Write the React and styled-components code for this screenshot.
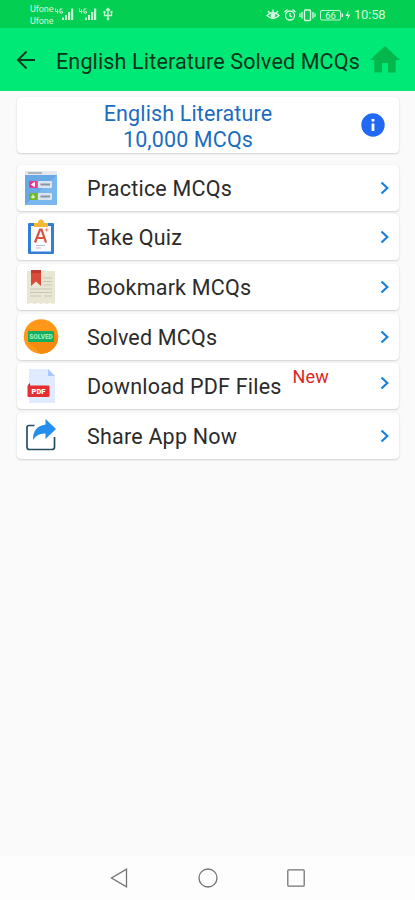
import styled, { createGlobalStyle } from "styled-components";

const items = [
  { label: "Practice MCQs", icon: PracticeIcon },
  { label: "Take Quiz", icon: QuizIcon },
  { label: "Bookmark MCQs", icon: BookmarkIcon },
  { label: "Solved MCQs", icon: SolvedIcon },
  { label: "Download PDF Files", icon: PdfIcon, isNew: true },
  { label: "Share App Now", icon: ShareIcon },
];

const App = () => {
  return (
    <Screen>
      <GlobalStyle />
      <StatusBar>
        <Carrier>
          <span>Ufone</span>
          <span>Ufone</span>
        </Carrier>
        <SignalIcons />
        <StatusRight>
          <StatusIcons />
          <Clock>10:58</Clock>
        </StatusRight>
      </StatusBar>
      <Header>
        <BackButton aria-label="Back">
          <svg width="20" height="20" viewBox="0 0 20 20" fill="none" stroke="#063d1c" strokeWidth="2">
            <path d="M19 10H2.500M10.500 1.500L2 10L10.500 18.500" />
          </svg>
        </BackButton>
        <Title>English Literature Solved MCQs</Title>
        <HomeButton aria-label="Home">
          <svg width="30" height="27" viewBox="0 0 30 27">
            <path d="M15 0L30 14H25.700V26.500H18V17H12V26.500H4.300V14H0Z" fill="#05b64c" />
          </svg>
        </HomeButton>
      </Header>
      <Content>
        <Banner>
          <BannerText>
            English Literature
            <br />
            10,000 MCQs
          </BannerText>
          <InfoButton aria-label="Info">
            <svg width="24" height="24" viewBox="0 0 24 24">
              <circle cx="12" cy="12" r="11.700" fill="#2169f3" />
              <path d="M10.600 6h2.800v2.600h-2.800zM10.600 10.500h2.800v7.500h-2.800z" fill="#fff" />
            </svg>
          </InfoButton>
        </Banner>
        <Menu>
          {items.map(({ label, icon: Icon, isNew }) => (
            <MenuItem key={label}>
              <IconBox>
                <Icon />
              </IconBox>
              <Label>{label}</Label>
              {isNew && <NewTag>New</NewTag>}
              <Chevron $raised={isNew} width="10" height="14" viewBox="0 0 10 14">
                <path d="M1.500 1.500L7.300 7L1.500 12.500" fill="none" stroke="#1b80dc" strokeWidth="2.200" />
              </Chevron>
            </MenuItem>
          ))}
        </Menu>
      </Content>
      <NavBar>
        <svg width="18" height="20" viewBox="0 0 18 20">
          <path d="M16.500 1.200V18.800L1.500 10Z" />
        </svg>
        <svg width="20" height="20" viewBox="0 0 20 20">
          <circle cx="10" cy="10" r="9" />
        </svg>
        <svg width="18" height="18" viewBox="0 0 18 18">
          <rect x="0.800" y="0.800" width="16.400" height="16.400" rx="1" />
        </svg>
      </NavBar>
    </Screen>
  );
};

function SignalIcons() {
  return (
    <svg width="60" height="18" viewBox="0 0 60 18" fill="#c9f5d6">
      <g fill="none" stroke="#c9f5d6" strokeWidth="1">
        <path d="M1.500 4.500V7.500H4.500M3.500 5V9.500M8.500 5H6V9H8.500V7.500H7.500" />
        <path d="M25.500 4.500V7.500H28.500M27.500 5V9.500M32.500 5H30V9H32.500V7.500H31.500" />
      </g>
      <path d="M8 13.500h2v2.500H8zM11 11h2v5h-2zM14 8h2.200v8h-2.200zM17 4.500h2.200V16h-2.200z" />
      <path d="M31 13.500h2v2.500h-2zM34 11h2v5h-2zM37 8h2.200v8h-2.200zM40 4.500h2.200V16h-2.200z" />
      <g fill="none" stroke="#c9f5d6" strokeWidth="1.300">
        <path d="M54 15V5M50.500 8V11.500H57.500V8M52 6.500L54 4.500L56 6.500" />
      </g>
      <circle cx="54" cy="15" r="1.400" />
      <path d="M49.500 7h2v2h-2zM56.500 7h2v2h-2z" />
    </svg>
  );
}

function StatusIcons() {
  return (
    <svg width="86" height="14" viewBox="0 0 86 14" fill="none" stroke="#dbf9e4" strokeWidth="1.300">
      {/* eye */}
      <path d="M2 7.500Q8 1.500 14 7.500Q8 13.500 2 7.500ZM8 4V1.500M4.500 4.800L3 3M11.500 4.800L13 3" />
      <circle cx="8" cy="7.500" r="1.800" fill="#dbf9e4" />
      {/* alarm */}
      <circle cx="25" cy="7.500" r="4.500" />
      <path d="M25 5V7.800L27 9M19.500 4L22.500 1.500M30.500 4L27.500 1.500" />
      {/* vibrate */}
      <rect x="39.500" y="2" width="6" height="10.500" rx="1" />
      <path d="M37 4V10.500M35 5.500V9M48 4V10.500M50 5.500V9" />
      {/* battery */}
      <rect x="55.500" y="2.500" width="20" height="9.500" rx="1.500" strokeWidth="0.900" />
      <path d="M77.300 5.500V9" strokeWidth="1.500" />
      <text
        x="65.500"
        y="10.500"
        textAnchor="middle"
        fontFamily="Roboto, sans-serif"
        fontSize="9.500"
        fill="#dbf9e4"
        stroke="none"
      >
        66
      </text>
      <path d="M83.500 2.500L80.500 8H83L82 12L85.500 6.500H83Z" fill="#dbf9e4" stroke="none" />
    </svg>
  );
}

function PracticeIcon() {
  return (
    <svg width="36" height="36" viewBox="0 0 36 36">
      <rect x="2" y="1" width="32" height="34" fill="#68a9e5" />
      <path d="M34 5V35H2Z" fill="#7ab7ee" />
      <rect x="2" y="1" width="32" height="4" fill="#e4e8ec" />
      <path d="M5 3H19" stroke="#9ca4ab" strokeWidth="1.500" />
      <rect x="6" y="11" width="8.500" height="7" rx="1" fill="#eb3790" />
      <rect x="6" y="23" width="8.500" height="7" rx="1" fill="#70ba29" />
      <rect x="15" y="11" width="14" height="7" rx="1" fill="#d9e5ef" />
      <rect x="15" y="23" width="14" height="7" rx="1" fill="#d9e5ef" />
      <path d="M17.500 14.500H27M17.500 26.500H27" stroke="#8997a4" strokeWidth="2" />
      <path d="M8.500 14.500L11.500 12.500V16.500ZM10 24.500V28.500M8 27H12" fill="#fff" stroke="#fff" />
    </svg>
  );
}

function QuizIcon() {
  return (
    <svg width="36" height="36" viewBox="0 0 36 36">
      <rect x="5" y="4" width="26" height="31" rx="1" fill="#347fd5" />
      <rect x="8" y="7" width="20" height="25.500" fill="#fafcff" />
      <path d="M11 4H15Q15 0.500 18 0.500T21 4H25V8H11Z" fill="#f5b834" />
      <path d="M12 23.500L17 10.500H18.500L23 23.500M14 19H21.500" fill="none" stroke="#d7543f" strokeWidth="2.200" />
      <path d="M22 11H25.500M23.700 9.200V12.700" stroke="#e78778" />
      <path d="M13 26.500H22M13 29H18" stroke="#b7bdc3" />
    </svg>
  );
}

function BookmarkIcon() {
  return (
    <svg width="36" height="36" viewBox="0 0 36 36">
      <path d="M4 2H32V34L29.500 35L27 34L24 35L21 34L18 35L15 34L12 35L8 34L4 35Z" fill="#e9e6d4" />
      <path
        d="M20 9H29M20 12.500H29M20 16H29M7 20H29M7 23.500H29M7 27H18M21 27H29"
        stroke="#c8c6b6"
        strokeWidth="1.200"
      />
      <path d="M8 1H18V17L13 12.500L8 17Z" fill="#d84a3c" />
      <path d="M8 1H18V4H8Z" fill="#bf392e" />
    </svg>
  );
}

function SolvedIcon() {
  return (
    <svg width="36" height="36" viewBox="0 0 36 36">
      <circle cx="18" cy="17.500" r="17.300" fill="#ff9818" />
      <path d="M5 22.500L17 34.800A17.300 17.300 0 0 0 35 20.500L31 12.500Z" fill="#f58a10" />
      <rect x="5" y="12" width="26" height="11" rx="1" fill="#13ae60" />
      <text
        x="18"
        y="20"
        textAnchor="middle"
        fontFamily="Roboto, sans-serif"
        fontSize="6.500"
        fontWeight="900"
        fill="#93efbd"
      >
        SOLVED
      </text>
    </svg>
  );
}

function PdfIcon() {
  return (
    <svg width="36" height="36" viewBox="0 0 36 36">
      <path d="M6 1H25L32 8V35H6Z" fill="#e1ebff" />
      <path d="M25 1L32 8H25Z" fill="#a8c7fa" />
      <path d="M4.500 17.500L7 15V18Z" fill="#b71c24" />
      <rect x="4.500" y="17.500" width="22" height="11.500" rx="1" fill="#e62f33" />
      <text
        x="15.500"
        y="26"
        textAnchor="middle"
        fontFamily="Roboto, sans-serif"
        fontSize="7.500"
        fontWeight="900"
        fill="#fff"
      >
        PDF
      </text>
    </svg>
  );
}

function ShareIcon() {
  return (
    <svg width="36" height="36" viewBox="0 0 36 36">
      <path
        d="M11.500 7.500H6Q4 7.500 4 9.500V29Q4 31.500 6.500 31.500H29Q31.500 31.500 31.500 29V19"
        fill="none"
        stroke="#244f64"
        strokeWidth="1.700"
      />
      <path d="M22.500 1L33 11L22.500 21V15.500Q14 15 10 22Q9.500 8.500 22.500 6.500Z" fill="#258eec" />
    </svg>
  );
}

const GlobalStyle = createGlobalStyle`
  * {
    box-sizing: border-box;
  }

  body {
    margin: 0;
    font-family: Roboto, sans-serif;
    background: #fafafa;
  }

  button {
    padding: 0;
    border: none;
    background: none;
    cursor: pointer;
  }

  svg {
    display: block;
    flex-shrink: 0;
  }
`;

const Screen = styled.div`
  width: 415px;
  height: 900px;
  display: flex;
  flex-direction: column;
  overflow: hidden;
`;

const StatusBar = styled.div`
  height: 28px;
  display: flex;
  align-items: flex-start;
  padding: 4px 29px 0 30px;
  background: #03cf53;
  color: #d0f7dc;
`;

const Carrier = styled.div`
  width: 24px;
  display: flex;
  flex-direction: column;
  margin-top: -1px;
  font-size: 9px;
  line-height: 12px;
  letter-spacing: -0.1px;
`;

const StatusRight = styled.div`
  display: flex;
  align-items: center;
  gap: 3px;
  margin-left: auto;
  padding-top: 3px;
`;

const Clock = styled.span`
  width: 32px;
  font-size: 13px;
  line-height: 15px;
  letter-spacing: -0.2px;
  white-space: nowrap;
`;

const Header = styled.header`
  height: 63px;
  display: flex;
  align-items: center;
  padding: 0 15px 0 16px;
  background: #00e976;
`;

const BackButton = styled.button`
  width: 40px;
`;

const Title = styled.h1`
  flex: 1;
  margin: 4px 0 0;
  font-size: 21.5px;
  font-weight: 400;
  line-height: 28px;
  letter-spacing: 0.15px;
  white-space: nowrap;
  color: #05351c;
`;

const HomeButton = styled.button`
  width: 30px;
`;

const Content = styled.main`
  flex: 1;
  padding: 6px 16px 0 17px;
`;

const Card = styled.div`
  display: flex;
  align-items: center;
  background: #fff;
  border-radius: 4px;
  box-shadow: 0 1px 2px rgba(0, 0, 0, 0.16), 0 0 1px rgba(0, 0, 0, 0.1);
`;

const Banner = styled(Card)`
  height: 56px;
  padding-right: 14px;
`;

const BannerText = styled.div`
  flex: 1;
  padding-top: 4px;
  padding-right: 2px;
  font-size: 21.5px;
  line-height: 26px;
  letter-spacing: 0.14px;
  text-align: center;
  color: #1c6cc0;
`;

const InfoButton = styled.button`
  width: 24px;
`;

const Menu = styled.div`
  display: flex;
  flex-direction: column;
  gap: 3.7px;
  margin-top: 11.5px;
`;

const MenuItem = styled(Card)`
  height: 46px;
  padding: 0 9px 0 6px;
`;

const IconBox = styled.div`
  width: 64px;
`;

const Label = styled.span`
  padding-top: 2px;
  font-size: 21.5px;
  line-height: 26px;
  letter-spacing: 0.21px;
  white-space: nowrap;
  color: #2b2b2b;
`;

const NewTag = styled.span`
  align-self: flex-start;
  margin: 3px 0 0 11px;
  font-size: 18px;
  line-height: 22px;
  letter-spacing: 0.2px;
  color: #dc2626;
`;

const Chevron = styled.svg`
  margin-left: auto;
  margin-bottom: ${(props) => (props.$raised ? "6px" : "0")};
`;

const NavBar = styled.nav`
  height: 44px;
  display: flex;
  align-items: center;
  justify-content: space-between;
  padding: 0 110px;
  background: #fdfdfd;
  fill: none;
  stroke: #747474;
  stroke-width: 1.3px;
`;

export default App;
